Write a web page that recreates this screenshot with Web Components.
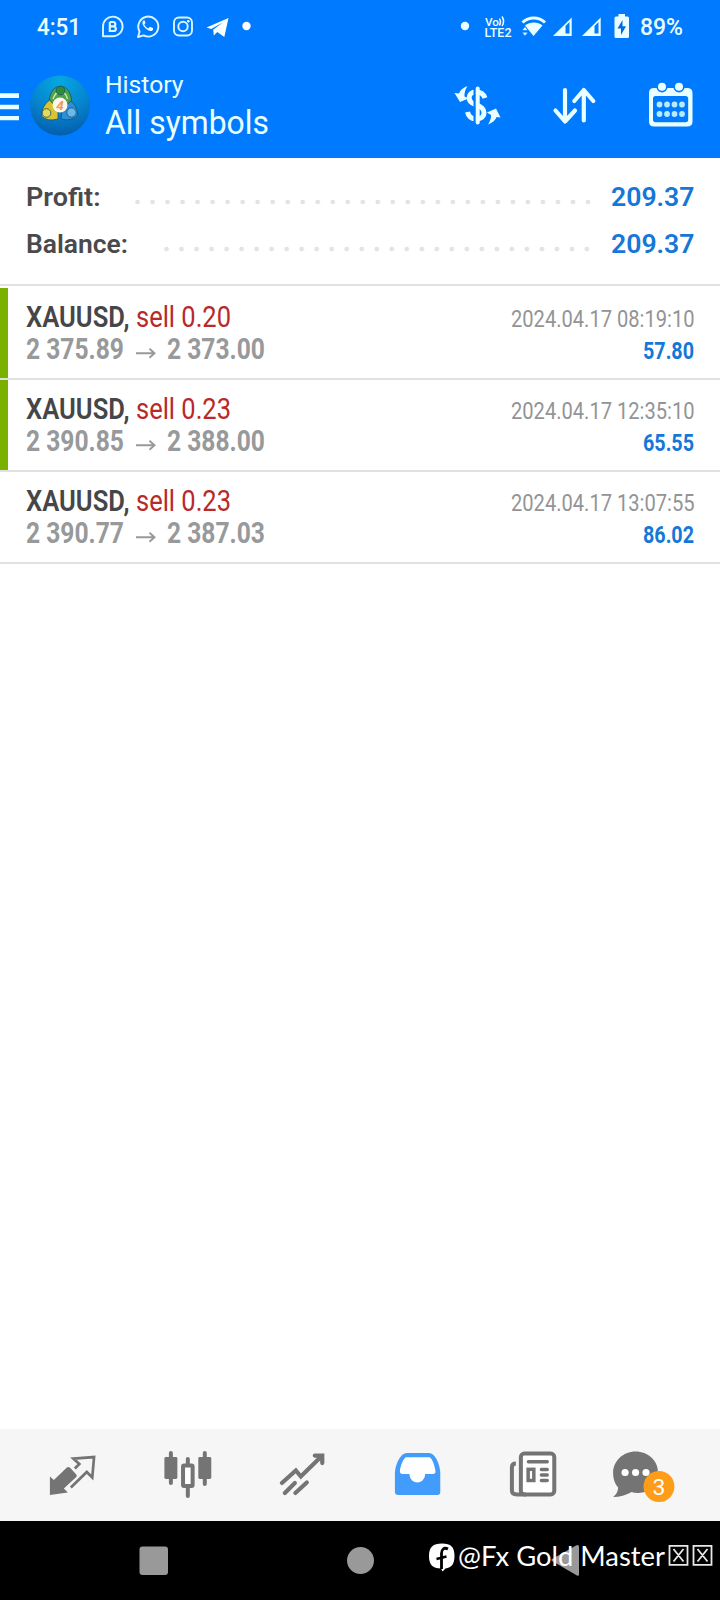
<!DOCTYPE html>
<html lang="en">
<head>
<meta charset="utf-8">
<title>History</title>
<style>
html,body{margin:0;padding:0;background:#fff}
body{font-family:Roboto,"Liberation Sans",sans-serif}
</style>
</head>
<body>
<history-app></history-app>
<script>
// Single line of text stretched horizontally to the width given in its "w" attribute.
class FitText extends HTMLElement{
  connectedCallback(){
    const w=+this.getAttribute('w');
    const root=this.shadowRoot||this.attachShadow({mode:'open'});
    root.innerHTML=`<style>:host{display:block;flex:none;width:${w}px;white-space:nowrap}span{display:inline-block;transform-origin:0 50%}</style><span><slot></slot></span>`;
    const s=root.querySelector('span');
    const n=s.getBoundingClientRect().width;
    if(n)s.style.transform=`scaleX(${w/n})`;
  }
}
const define=(name,html)=>customElements.define(name,class extends HTMLElement{
  connectedCallback(){
    if(this.shadowRoot)return;
    const t=document.createElement('template');
    t.innerHTML=typeof html==='function'?html(this):html;
    this.attachShadow({mode:'open'}).append(t.content.cloneNode(true));
  }
});

define('status-bar',`<style>
:host{display:flex;height:54px;padding:0 37px 0 37px;align-items:center;box-sizing:border-box;color:#eaffff;font-weight:500;font-size:23px;line-height:54px}
svg{display:block;flex:none}.sp{flex:1}fit-text{padding-top:1px}
</style>
<fit-text w="44">4:51</fit-text>
<svg width="172" height="54" viewBox="81 0 172 54" fill="none" stroke="#d8f6ff" stroke-width="1.9">
<path d="M103 36.200V26.300a9.800 9.800 0 1 1 9.800 9.900z" stroke-linejoin="round"/>
<path d="M109.800 22v9h3.600a2.300 2.300 0 0 0 .4-4.600h-4m3.300 0a2.200 2.200 0 0 0 0-4.400h-3.300" stroke-width="2.200"/>
<path d="M138 37l1.600-5.500a10 10 0 1 1 4 3.900z" stroke-linejoin="round"/>
<path d="M143.500 20.500c-2.200 2-.6 5.200 2 7.700s5.900 3.900 7.600 1.500l-.2-1.600-3-1.300-1.600 1.600c-2-.8-3.300-2.200-4-3.900l1.200-1.400-1-2.800z" fill="#eaffff" stroke="none"/>
<rect x="174" y="17.500" width="18" height="18" rx="5"/><circle cx="183" cy="26.500" r="4.700"/><circle cx="188.300" cy="21.300" r="1.300" fill="#eaffff" stroke="none"/>
<path d="M206.500 27.500L228.500 18l-4.200 19-7-4.900-3.500 3.300-.6-5.700 9.800-7.400-11.700 6.600z" fill="#fff" stroke="none"/>
<circle cx="246.500" cy="26" r="4.200" fill="#fff" stroke="none"/>
</svg>
<div class="sp"></div>
<svg width="180" height="54" viewBox="460 0 180 54" fill="#eaffff">
<circle cx="465" cy="26" r="4.200"/>
<text font-family="Roboto,sans-serif" font-weight="500"><tspan x="485" y="25.500" font-size="11.500" textLength="14" lengthAdjust="spacingAndGlyphs">Vo</tspan><tspan x="484.500" y="37" font-size="12.500" textLength="27" lengthAdjust="spacingAndGlyphs">LTE2</tspan></text>
<path d="M499.500 18.500q2 3.500 0 7M502 16.500q3.200 5 0 9.500" fill="none" stroke="#eaffff" stroke-width="1.500"/>
<path d="M522.500 22.500a16.500 16.500 0 0 1 22.500 0" fill="none" stroke="#eaffff" stroke-width="3"/>
<path d="M525 25.600a13.500 13.500 0 0 1 17.500 0L533.500 36z"/>
<path d="M522 30.500l3-4 3 4zm0 1.700h6l-3 4z" stroke="#007aff" stroke-width=".7"/>
<path d="M553 36l18.700-18.500V36zm12.500-10V33.500h4v-11.500z" fill-rule="evenodd"/>
<path d="M582 36l18.700-18.500V36zm12.500-10V33.500h4v-11.500z" fill-rule="evenodd"/>
<path d="M618.500 14h6.500v2.500h2.500q1.500 0 1.500 1.500v18.500q0 1.500-1.500 1.500h-11.500q-1.500 0-1.500-1.500V18q0-1.500 1.500-1.500h2.500z"/>
<path d="M622.500 20l-5 8.500h3.500v6.500l5-8.800h-3.500z" fill="#006be0"/>
</svg>
<fit-text w="43">89%</fit-text>`);

define('app-bar',`<style>
:host{display:flex;height:104px;align-items:center;color:#eaffff}
svg{display:block;flex:none}
.t{margin-left:15px;padding-bottom:3px}
.a{font-size:24px;line-height:36px}.b{font-size:32.500px;line-height:40px}
.sp{flex:1}
</style>
<svg width="90" height="104" viewBox="0 54 90 104">
<defs><radialGradient id="g" cx=".5" cy=".1" r=".95"><stop offset="0" stop-color="#05a8e2"/><stop offset=".55" stop-color="#0684cf"/><stop offset="1" stop-color="#0459a8"/></radialGradient></defs>
<path d="M0 93.300h19v4.600H0zM0 104.700h19v4.600H0zM0 115.900h19v4.300H0z" fill="#eaffff"/>
<circle cx="60" cy="105.500" r="30" fill="url(#g)"/>
<g stroke="#17506b" stroke-width=".8">
<path d="M49 104q0-13 7.500-17h8q7 4 7.500 17l-6 2H54z" fill="#4fa14b"/><path d="M53 99q2-7 7.500-7t7 7" fill="none" stroke="#c9eeb0" stroke-width="1.300"/><circle cx="60.500" cy="90.500" r="4.400" fill="#2f8b3c"/>
<path d="M58 119q-11 3-16.500-3 0-10 8-16l8.500 9z" fill="#d8c332"/><circle cx="46.500" cy="113" r="4.300" fill="#e9d95a"/>
<path d="M61 119q11 3 17-4-1-9-7-14l-9 8z" fill="#2e8fd8"/><circle cx="71.500" cy="112.500" r="4.700" fill="#68b9ef"/></g>
<circle cx="60" cy="105" r="7.500" fill="#fff6ea"/>
<text x="60" y="110" text-anchor="middle" font-family="Roboto,sans-serif" font-weight="700" font-style="italic" font-size="13.500" fill="#ea9a62">4</text>
</svg>
<div class="t"><fit-text class="a" w="78.500">History</fit-text><fit-text class="b" w="164">All symbols</fit-text></div>
<div class="sp"></div>
<svg width="270" height="104" viewBox="450 54 270 104" fill="none" stroke="#eaffff">
<path d="M485 98q-2-6-9-6c-9 0-9 10-.5 12.600 11.500 2.900 11 14.400 1 14.400q-7.500 0-9-7" stroke-width="5"/>
<path d="M474.700 88.500v34" stroke="#007aff" stroke-width="2.400"/>
<path d="M477.700 88.500v34" stroke-width="4" stroke-linecap="round"/>
<path d="M467.500 86q-7 2.500-8.500 7.500l-4.500-.5 5.500 9 8.500-3.500-4-2q-.5-5 3-10.500z" fill="#eaffff" stroke="none"/>
<path d="M488 124.500q7-2.500 8.500-7.500l4 .5-4.500-9-9 4 4 2.500q.5 4-3 9.500z" fill="#eaffff" stroke="none"/>
<g stroke-width="4.200" stroke-linecap="round" stroke-linejoin="round"><path d="M565 90v31.500M555.500 110.500l9.500 11 10-11M583.800 120.500V90M574.300 101l9.500-11 9.500 11"/></g>
<path d="M654 88h33q5.500 0 5.500 5v28.500q0 5-5.500 5h-33q-5-0-5-5V93q0-5 5-5zm1.500 8q-2.500 0-2.500 2.500v21q0 2.700 2.500 2.700h30q2.700 0 2.700-2.700v-21q0-2.500-2.700-2.500z" fill="#eaffff" stroke="none" fill-rule="evenodd"/>
<g fill="#eaffff" stroke="#007aff" stroke-width="1.600"><circle cx="662" cy="86.800" r="4.800"/><circle cx="679" cy="86.800" r="4.800"/></g>
<path d="M659.500 104.500h.01M667 104.500h.01M674.500 104.500h.01M682 104.500h.01M659.500 114h.01M667 114h.01M674.500 114h.01M682 114h.01" stroke="#b8ebff" stroke-width="5.800" stroke-linecap="round"/>
</svg>`);

define('summary-line',el=>`<style>
:host{display:flex;align-items:center;height:47px;padding:0 26px 0 25.500px;font-size:26px;font-weight:600;line-height:47px;color:#4a4a4c}
.d{flex:1;height:6px;margin:10px ${el.getAttribute('end')}px 0 ${el.getAttribute('gap')}px;background:radial-gradient(circle at 7.500px 3px,#e3e3e5 2px,transparent 2.700px) 0 0/15.020px 6px repeat-x}
.v{color:#1577d8}
</style><fit-text w="${el.getAttribute('lw')}">${el.getAttribute('label')}</fit-text><div class="d"></div><fit-text class="v" w="83.500">${el.getAttribute('value')}</fit-text>`);

define('deal-row',el=>`<style>
:host{display:flex;height:92px;box-sizing:border-box;border-bottom:2px solid #e1e1e1;background:#fff}
.bar{width:7.500px;background:${el.hasAttribute('marked')?'#7ab000':'transparent'}}
.l{margin-left:18.500px;padding-top:12.500px;flex:1;font-size:29.500px;line-height:32px}
.r{width:183.500px;margin-right:26px;padding-top:15px;display:flex;flex-direction:column;align-items:flex-end;line-height:32px}
.x{display:flex}.s{font-weight:600;color:#464648}.k{color:#b8292a;margin-left:6.500px}
.p{font-weight:700;color:#97999b}.g{margin-left:10.500px}
svg{display:block;margin-left:12px}
.dt{font-size:24px;color:#929496}.v{font-size:23.500px;font-weight:700;color:#1577d8}
</style><div class="bar"></div>
<div class="l"><div class="x"><fit-text class="s" w="103.500">XAUUSD,</fit-text><fit-text class="k" w="95">${el.getAttribute('kind')}</fit-text></div>
<div class="x"><fit-text class="p" w="98">${el.getAttribute('from')}</fit-text><svg width="20" height="32" viewBox="0 0 20 32" fill="none" stroke="#97999b" stroke-width="1.900"><path d="M0 20.300h18M13.500 15.800L18.500 20.300l-5 4.500"/></svg><fit-text class="p g" w="98">${el.getAttribute('to')}</fit-text></div></div>
<div class="r"><fit-text class="dt" w="183.500">${el.getAttribute('time')}</fit-text><fit-text class="v" w="51">${el.getAttribute('profit')}</fit-text></div>`);

define('tab-bar',`<style>
:host{display:grid;grid-template-columns:repeat(6,1fr);padding:0 16px;height:92px;background:#f6f6f6}
svg{display:block;width:100%;height:92px}
div{display:flex;justify-content:center}
</style>
<div><svg viewBox="16 1429 115 92" fill="#747474"><path d="M50 1476.500l4 3.500 13-12.500q1.500-1 3 0l6.500 7q1 1.500 0 2.500l-12.500 11.500 4 4-18 2.500z"/><path d="M71 1487.500l16-15.500 5.500 5.500 1.800-20.500-20.800 1.500 6 5.500-4.500 4.500" fill="none" stroke="#747474" stroke-width="2.700"/></svg></div>
<div><svg viewBox="130.500 1429 115 92" fill="#747474"><g stroke="#747474" stroke-width="4" stroke-linecap="round"><path d="M170.500 1453v30M204.500 1453v31M187.500 1459v6M187.500 1487v9"/></g><rect x="164" y="1457" width="13" height="22" rx="1.500"/><rect x="198" y="1457" width="13" height="22" rx="1.500"/><rect x="182.700" y="1465.500" width="9.600" height="20.500" rx="1" fill="#fff" stroke="#747474" stroke-width="4"/></svg></div>
<div><svg viewBox="245 1429 115 92" fill="none" stroke="#747474" stroke-width="4.200" stroke-linecap="round"><path d="M282 1483l14-12.500 5 6 21-20.500M315 1455.500h7.500v7.500M285 1493l10-10M295.500 1493l11.500-10.500"/></svg></div>
<div><svg viewBox="360 1429 115 92"><path d="M407 1453h22c6 0 11.500 11 11.500 21v18q0 3-3 3h-39q-3.500 0-3.500-3v-18c0-10 6-21 12-21z" fill="#419cfc"/><path d="M406 1457.300c-2.500 1.200-5.500 9-6 13.700q0 3 2.700 3h7v1.500a7.800 7.800 0 0 0 15.500 0V1474h8q2.700 0 2.500-2.500c-.5-4.500-3-13-6-14.200z" fill="#fff"/></svg></div>
<div><svg viewBox="475 1429 115 92" fill="none" stroke="#747474" stroke-width="4"><rect x="521" y="1453.500" width="33.500" height="41" rx="3.500" fill="#fff"/><path d="M516 1463.500q-4 0-4 4v23q0 4 5 4h9"/><path d="M528.500 1461.700h19M541.500 1469.500h6M541.500 1475h6M541.500 1480.500h6" stroke-linecap="round" stroke-width="3.300"/><rect x="528.300" y="1469.300" width="5.700" height="11.200" stroke-width="3.500"/></svg></div>
<div><svg viewBox="589.300 1429 115 92"><path d="M636 1451.500c12.500 0 22.500 9 22.500 21s-9 21-20.500 20.500q-3.500 0-6-1-8.500 5-18.500 5 5-4 5-9.500c-3-3.500-5-8-5-14.500 0-12 10-21.500 22.500-21.500z" fill="#747474"/><g fill="#fff"><circle cx="625.500" cy="1472.500" r="3.600"/><circle cx="636" cy="1472.500" r="3.600"/><circle cx="646.500" cy="1472.500" r="3.600"/></g><circle cx="659.500" cy="1486.500" r="15.500" fill="#ff9d18"/><text x="659.500" y="1495" text-anchor="middle" font-family="Roboto,sans-serif" font-size="23" fill="#fff">3</text></svg></div>`);

define('nav-bar',`<style>
:host{display:block;height:79px;background:#000;position:relative}
svg{display:block}
.m{position:absolute;left:429px;top:17px;display:flex;align-items:center;height:36px;color:#fff;font:400 27px/36px Lato,sans-serif}
.m fit-text{margin-left:3px}
</style>
<svg width="720" height="79" viewBox="0 1521 720 79" fill="#999"><rect x="139.500" y="1546.500" width="28.500" height="28.500" rx="3"/><circle cx="360.500" cy="1560.500" r="13.500"/><path d="M577.500 1545q1.500 0 1.500 1.500v28q0 2-2 1l-25-14.500q-1.500-1 0-2l24-13.500z"/></svg>
<div class="m"><svg width="26" height="36" viewBox="429 1539 26 36"><path d="M442 1544.500c9 0 12.500 3.500 12.500 12.500 0 8-3 11.500-9 12.500l-3 3-1.500-3c-8.500 0-12-4-12-12.500 0-9 4-12.500 13-12.500z" fill="#fff"/><path d="M448 1550c-4-2-6.500.5-6.500 4.500v15.500M436.500 1560l10-2.500" fill="none" stroke="#000" stroke-width="2.800"/></svg>
<fit-text w="207">@Fx Gold Master</fit-text>
<svg style="margin-left:3px" width="45" height="36" viewBox="668 1539 45 36" fill="none" stroke="#e8e8e8" stroke-width="1.800"><path d="M669.500 1546.800h18v19h-18zM673.500 1550l10 12.500M683.500 1550l-10 12.500M693.500 1546.800h18v19h-18zM697.500 1550l10 12.500M707.500 1550l-10 12.500"/></svg></div>`);

define('history-app',`<style>
:host{display:flex;flex-direction:column;width:720px;height:1600px;background:#fff;overflow:hidden}
header{background:#007aff;height:157.500px;flex:none}
section{height:128.500px;box-sizing:border-box;border-bottom:2px solid #e1e1e1;padding-top:16px;flex:none}
main{flex:1;padding-top:2px}
</style>
<header><status-bar></status-bar><app-bar></app-bar></header>
<section><summary-line label="Profit:" value="209.37" lw="74.500" gap="30" end="15"></summary-line><summary-line label="Balance:" value="209.37" lw="102" gap="31" end="17"></summary-line></section>
<main>
<deal-row marked kind="sell 0.20" from="2 375.89" to="2 373.00" time="2024.04.17 08:19:10" profit="57.80"></deal-row>
<deal-row marked kind="sell 0.23" from="2 390.85" to="2 388.00" time="2024.04.17 12:35:10" profit="65.55"></deal-row>
<deal-row kind="sell 0.23" from="2 390.77" to="2 387.03" time="2024.04.17 13:07:55" profit="86.02"></deal-row>
</main>
<tab-bar></tab-bar>
<nav-bar></nav-bar>`);
customElements.define('fit-text',FitText);
</script>
</body>
</html>
